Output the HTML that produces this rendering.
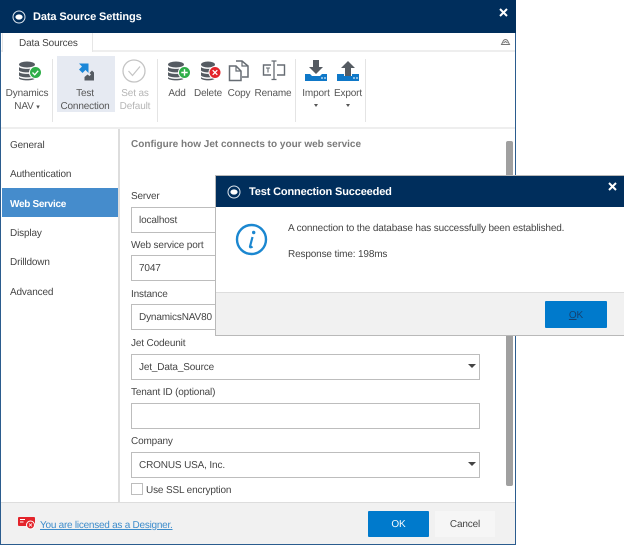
<!DOCTYPE html>
<html><head><meta charset="utf-8"><style>
html,body{margin:0;padding:0;background:#fff}
body{width:624px;height:545px;position:relative;overflow:hidden;font-family:"Liberation Sans",sans-serif;font-size:10px;letter-spacing:-.15px;color:#444;text-rendering:geometricPrecision}
.a{position:absolute;white-space:nowrap}
.c{text-align:center;transform:translateX(-50%)}
.inp{position:absolute;left:131px;width:347px;height:24px;background:#fff;border:1px solid #bdbdbd;line-height:26px;text-indent:7px;color:#444}
.arr{position:absolute;left:468px;width:0;height:0;border-left:4px solid transparent;border-right:4px solid transparent;border-top:4px solid #444}
.nav{position:absolute;left:10px;color:#444}
.lbl{position:absolute;left:131px;color:#444}
.t{color:#555;line-height:13px}
svg{position:absolute;overflow:visible}
</style></head><body>
<div class="a" style="left:0;top:0;width:516px;height:545px;background:#fff;box-sizing:border-box;border:1px solid #2b5c8e;border-top:0"></div>
<div class="a" style="left:0;top:0;width:516px;height:33px;background:#002e5c"></div>
<svg style="left:12px;top:10px" width="14" height="14" viewBox="0 0 14 14"><circle cx="7" cy="7" r="6" fill="none" stroke="#dfe7ef" stroke-width="1"/><ellipse cx="7" cy="7" rx="3.600" ry="2.600" fill="#fff"/></svg>
<div class="a" style="left:33px;top:11px;color:#fff;font-weight:bold;font-size:11px;line-height:13px;letter-spacing:-.1px">Data Source Settings</div>
<svg style="left:499px;top:8px" width="9" height="9" viewBox="0 0 9 9"><path d="M1 1L8 8M8 1L1 8" stroke="#fff" stroke-width="2"/></svg>
<!-- tab row -->
<div class="a" style="left:1px;top:50px;width:514px;height:2px;background:#eee"></div>
<div class="a" style="left:2px;top:33px;width:89px;height:19px;background:#fff;border:1px solid #e6e6e6;border-top:0;border-bottom:0"></div>
<div class="a" style="left:19px;top:37px;line-height:13px;color:#444">Data Sources</div>
<svg style="left:501px;top:38px" width="9" height="7" viewBox="0 0 9 7"><path d="M0.500 6.500L2.500 2.500Q4.500 .5 6.500 2.500L8.500 6.500Z M2.500 5L4.500 3.500L6.500 5" fill="none" stroke="#777" stroke-width="1"/></svg>
<!-- ribbon -->
<div class="a" style="left:57px;top:56px;width:58px;height:56px;background:#e6eaf2"></div>
<div class="a" style="left:52px;top:59px;width:1px;height:63px;background:#e4e4e4"></div>
<div class="a" style="left:157px;top:59px;width:1px;height:63px;background:#e4e4e4"></div>
<div class="a" style="left:295px;top:59px;width:1px;height:63px;background:#e4e4e4"></div>
<div class="a" style="left:365px;top:59px;width:1px;height:63px;background:#e4e4e4"></div>
<div class="a" style="left:1px;top:127px;width:514px;height:2px;background:#eee"></div>
<!-- db icons -->
<svg style="left:18px;top:61px" width="26" height="22" viewBox="0 0 26 22"><g fill="#555b62"><ellipse cx="9" cy="3.500" rx="8" ry="3"/><path d="M1 6c2 2.500 14 2.500 16 0v3.500c-2 2.500-14 2.500-16 0z"/><path d="M1 11c2 2.500 14 2.500 16 0v3.500c-2 2.500-14 2.500-16 0z"/><path d="M1 16c2 2.500 14 2.500 16 0v1.500c-2 2.500-14 2.500-16 0z"/></g><circle cx="17.500" cy="11.500" r="6" fill="#2fae49" stroke="#fff" stroke-width="1"/><path d="M14.500 11.500l2.200 2.300 3.500-4" fill="none" stroke="#fff" stroke-width="1.300"/></svg>
<svg style="left:167px;top:61px" width="26" height="22" viewBox="0 0 26 22"><g fill="#555b62"><ellipse cx="9" cy="3.500" rx="8" ry="3"/><path d="M1 6c2 2.500 14 2.500 16 0v3.500c-2 2.500-14 2.500-16 0z"/><path d="M1 11c2 2.500 14 2.500 16 0v3.500c-2 2.500-14 2.500-16 0z"/><path d="M1 16c2 2.500 14 2.500 16 0v1.500c-2 2.500-14 2.500-16 0z"/></g><circle cx="17.500" cy="11.500" r="6" fill="#2fae49" stroke="#fff" stroke-width="1"/><path d="M14.300 11.500h6.400M17.500 8.300v6.400" stroke="#fff" stroke-width="1.400"/></svg>
<svg style="left:200px;top:61px" width="26" height="22" viewBox="0 0 26 22"><g fill="#555b62"><ellipse cx="8" cy="3.500" rx="7" ry="3"/><path d="M1 6c2 2.500 12 2.500 14 0v3.500c-2 2.500-12 2.500-14 0z"/><path d="M1 11c2 2.500 12 2.500 14 0v3.500c-2 2.500-12 2.500-14 0z"/><path d="M1 16c2 2.500 12 2.500 14 0v1.500c-2 2.500-12 2.500-14 0z"/></g><circle cx="15" cy="11.500" r="6" fill="#e3242b" stroke="#fff" stroke-width="1"/><path d="M12.700 9.200l4.600 4.600M17.300 9.200l-4.600 4.600" stroke="#fff" stroke-width="1.300"/></svg>
<!-- test connection -->
<svg style="left:78px;top:62px" width="17" height="19" viewBox="0 0 17 19"><path d="M1 1.500h9.500v9.500l-3-3-3 3-3.500-3.500 3-3z" fill="#1b87d8"/><path d="M16 18.500H6.500v-3.500l3-2.500 2 1.500 1.500-1.500-1.500-1.500 2.500-2.500 2 2z" fill="#555b62"/></svg>
<!-- set default -->
<svg style="left:122px;top:59px" width="24" height="24" viewBox="0 0 24 24"><circle cx="12" cy="12" r="11" fill="none" stroke="#c4c4c4" stroke-width="1.300"/><path d="M6.500 12l4 4.500 7.500-9" fill="none" stroke="#c4c4c4" stroke-width="1.200"/></svg>
<!-- copy -->
<svg style="left:228px;top:60px" width="22" height="22" viewBox="0 0 22 22"><path d="M8 1h6l6 5v11h-6" fill="none" stroke="#666c73" stroke-width="1.500"/><path d="M1.500 6H8l5 5v9.500H1.500z" fill="#fff" stroke="#666c73" stroke-width="1.500"/><path d="M14 1v5h6M8 6v5h5" fill="none" stroke="#666c73" stroke-width="1.200"/></svg>
<!-- rename -->
<svg style="left:262px;top:60px" width="24" height="22" viewBox="0 0 24 22"><path d="M9 5H1.500v10H9M15 5h7.500v10H15" fill="none" stroke="#666c73" stroke-width="1.400"/><path d="M9.500 1h5M9.500 19.500h5M12 1v18.500" fill="none" stroke="#666c73" stroke-width="1.300"/><path d="M4 8h4M6 8v4.500" stroke="#666c73" stroke-width="1.100"/></svg>
<!-- import/export -->
<svg style="left:304px;top:60px" width="24" height="22" viewBox="0 0 24 22"><path d="M9 0h6v7h4l-7 7-7-7h4z" fill="#555b62"/><path d="M1 14h5l2 2h8l2-2h5v7H1z" fill="#0f78c8"/><path d="M17 18h2M20 18h2" stroke="#fff"/></svg>
<svg style="left:336px;top:60px" width="24" height="22" viewBox="0 0 24 22"><path d="M12 1l7 7h-4v8H9V8H5z" fill="#555b62"/><path d="M1 14h7v2h8v-2h7v7H1z" fill="#0f78c8"/><path d="M17 18h2M20 18h2" stroke="#fff"/></svg>
<!-- ribbon labels -->
<div class="a c t" style="left:27px;top:87px">Dynamics<br>NAV <span style="font-size:7px">▾</span></div>
<div class="a c t" style="left:85px;top:87px">Test<br>Connection</div>
<div class="a c t" style="left:135px;top:87px;color:#b5b5b5">Set as<br>Default</div>
<div class="a c t" style="left:177px;top:87px">Add</div>
<div class="a c t" style="left:208px;top:87px">Delete</div>
<div class="a c t" style="left:239px;top:87px">Copy</div>
<div class="a c t" style="left:273px;top:87px">Rename</div>
<div class="a c t" style="left:316px;top:87px">Import</div>
<div class="a c t" style="left:348px;top:87px">Export</div>
<div class="a" style="left:314px;top:104px;width:0;height:0;border-left:2px solid transparent;border-right:2px solid transparent;border-top:3px solid #555"></div>
<div class="a" style="left:346px;top:104px;width:0;height:0;border-left:2px solid transparent;border-right:2px solid transparent;border-top:3px solid #555"></div>
<!-- nav -->
<div class="a" style="left:118px;top:129px;width:2px;height:373px;background:#ddd"></div>
<div class="a" style="left:2px;top:188px;width:116px;height:29px;background:#458ccc"></div>
<div class="nav" style="top:140px">General</div>
<div class="nav" style="top:169px">Authentication</div>
<div class="nav" style="top:199px;color:#fff;font-weight:bold;letter-spacing:-.3px">Web Service</div>
<div class="nav" style="top:228px">Display</div>
<div class="nav" style="top:257px">Drilldown</div>
<div class="nav" style="top:287px">Advanced</div>
<!-- content -->
<div class="a" style="left:131px;top:139px;color:#7b7b7b;font-weight:bold;letter-spacing:0">Configure how Jet connects to your web service</div>
<div class="lbl" style="top:191px">Server</div>
<div class="inp" style="top:207px">localhost</div>
<div class="lbl" style="top:240px">Web service port</div>
<div class="inp" style="top:255px">7047</div>
<div class="lbl" style="top:289px">Instance</div>
<div class="inp" style="top:304px">DynamicsNAV80</div>
<div class="lbl" style="top:338px">Jet Codeunit</div>
<div class="inp" style="top:354px">Jet_Data_Source</div><div class="arr" style="top:364px"></div>
<div class="lbl" style="top:387px">Tenant ID (optional)</div>
<div class="inp" style="top:403px"></div>
<div class="lbl" style="top:436px">Company</div>
<div class="inp" style="top:452px">CRONUS USA, Inc.</div><div class="arr" style="top:462px"></div>
<div class="a" style="left:131px;top:483px;width:10px;height:10px;border:1px solid #bdbdbd;background:#fff"></div>
<div class="a" style="left:146px;top:485px;color:#444">Use SSL encryption</div>
<div class="a" style="left:506px;top:141px;width:7px;height:345px;background:#a0a0a0;border-radius:2px"></div>
<!-- footer -->
<div class="a" style="left:1px;top:502px;width:514px;height:42px;background:#f1f1f1;border-top:1px solid #ddd;box-sizing:border-box"></div>
<svg style="left:18px;top:517px" width="18" height="13" viewBox="0 0 18 13"><rect x="0" y="0" width="17" height="9" rx="1" fill="#e3242b"/><path d="M2 2.500h5M2 5h3.500" stroke="#fff"/><circle cx="12.500" cy="8" r="4" fill="#e3242b" stroke="#fff"/><path d="M11 6.500l3 3M14 6.500l-3 3" stroke="#fff" stroke-width=".8"/></svg>
<div class="a" style="left:40px;top:520px;color:#3d8ccb;text-decoration:underline;letter-spacing:-.25px">You are licensed as a Designer.</div>
<div class="a" style="left:368px;top:511px;width:61px;height:26px;background:#007acc;color:#fff;text-align:center;line-height:28px;border-radius:1px">OK</div>
<div class="a" style="left:435px;top:511px;width:60px;height:26px;background:#f6f6f6;color:#444;text-align:center;line-height:28px">Cancel</div>
<!-- dialog -->
<div class="a" style="left:215px;top:175px;width:409px;height:161px;background:#fff;box-sizing:border-box;border:1px solid #b9b9b9;border-right:0"></div>
<div class="a" style="left:216px;top:176px;width:408px;height:31px;background:#002e5c"></div>
<svg style="left:227px;top:185px" width="14" height="14" viewBox="0 0 14 14"><circle cx="7" cy="7" r="6" fill="none" stroke="#dfe7ef" stroke-width="1"/><ellipse cx="7" cy="7" rx="3.600" ry="2.600" fill="#fff"/></svg>
<div class="a" style="left:249px;top:186px;color:#fff;font-weight:bold;font-size:11px;line-height:13px">Test Connection Succeeded</div>
<svg style="left:608px;top:182px" width="9" height="9" viewBox="0 0 9 9"><path d="M1 1L8 8M8 1L1 8" stroke="#fff" stroke-width="2"/></svg>
<svg style="left:235px;top:223px" width="33" height="33" viewBox="0 0 33 33"><circle cx="16.500" cy="16.500" r="14.500" fill="none" stroke="#1b87d0" stroke-width="2.400"/><circle cx="18.700" cy="9.500" r="1.700" fill="#1b87d0"/><path d="M17.500 14l-2.500 9.500c-.2 1 1 1.200 2.500 0" fill="none" stroke="#1b87d0" stroke-width="2.200"/></svg>
<div class="a" style="left:288px;top:223px;color:#444">A connection to the database has successfully been established.</div>
<div class="a" style="left:288px;top:249px;color:#444">Response time: 198ms</div>
<div class="a" style="left:216px;top:292px;width:408px;height:43px;background:#f1f1f1;border-top:1px solid #ddd;box-sizing:border-box"></div>
<div class="a" style="left:545px;top:301px;width:62px;height:27px;background:#007acc;color:#15406e;text-align:center;line-height:29px;border-radius:1px"><u>O</u>K</div>
</body></html>
